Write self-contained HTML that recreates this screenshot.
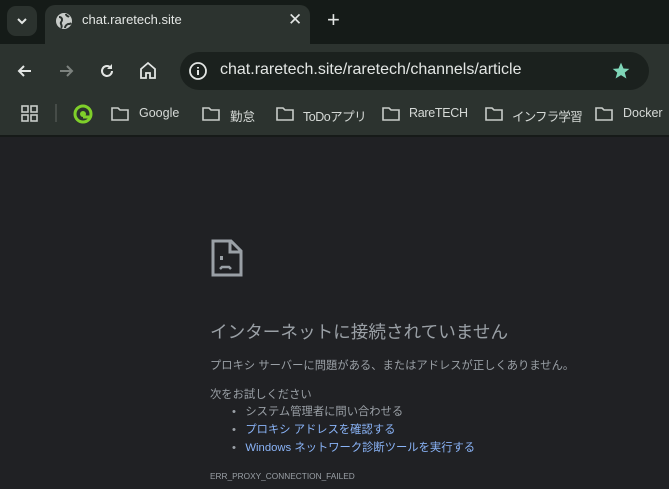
<!DOCTYPE html>
<html><head><meta charset="utf-8"><style>
*{margin:0;padding:0;box-sizing:border-box}
body{width:669px;height:489px;overflow:hidden;background:#202124;font-family:"Liberation Sans","Noto Sans CJK JP",sans-serif;position:relative}
.strip{position:absolute;left:0;top:0;width:669px;height:44px;background:#151b18}
.dd{position:absolute;left:7px;top:6px;width:30px;height:30px;border-radius:9px;background:#2b322e}
.tab{position:absolute;left:45px;top:5px;width:265px;height:40px;background:#2c332f;border-radius:10px 10px 0 0}
.tb{position:absolute;left:0;top:44px;width:669px;height:92px;background:#2c332f}
.omni{position:absolute;left:180px;top:52px;width:469px;height:38px;border-radius:19px;background:#1b211e}
.t{position:absolute;color:#e3e6e4;white-space:nowrap}
.bm{position:absolute;top:106px;font-size:12.5px;color:#d6dad7;white-space:nowrap}
.sep{position:absolute;left:0;top:135px;width:669px;height:2px;background:#161a18}
.p{position:absolute;white-space:nowrap;color:#9aa0a6}
.blue{color:#8ab4f8}
</style></head><body>
<div class="strip"></div>
<div class="dd"></div>
<svg style="position:absolute;left:15px;top:14px" width="14" height="14"><path d="M3 5l4 4 4-4" stroke="#e3e6e4" stroke-width="2" fill="none"/></svg>
<div class="tab"></div>
<svg style="position:absolute;left:55px;top:12px" width="18" height="18" viewBox="0 0 18 18"><circle cx="9" cy="9" r="8" fill="#c8ccc9"/><path d="M4 5c2 0 3 1 3 3s-2 2-1 4 1 3 0 4M11 2c0 2 2 2 3 3M10 16c0-2 1-3 3-4 2 0 2 0 3-1" stroke="#2c332f" stroke-width="2" fill="none"/></svg>
<div class="t" style="left:82px;top:12px;font-size:13px">chat.raretech.site</div>
<div class="t" style="left:288px;top:10px;font-size:17px">✕</div>
<div class="t" style="left:327px;top:7px;font-size:22px">+</div>
<div class="tb"></div>
<svg style="position:absolute;left:15px;top:61px" width="20" height="20"><path d="M16 10H4M9 5l-5 5 5 5" stroke="#e3e6e4" stroke-width="2" fill="none"/></svg>
<svg style="position:absolute;left:56px;top:61px" width="20" height="20"><path d="M4 10h12M11 5l5 5-5 5" stroke="#7c827e" stroke-width="2" fill="none"/></svg>
<svg style="position:absolute;left:97px;top:61px" width="20" height="20"><path d="M15 10a5 5 0 1 1-2-4" stroke="#e3e6e4" stroke-width="2" fill="none"/><path d="M15 3v5h-5z" fill="#e3e6e4"/></svg>
<svg style="position:absolute;left:138px;top:60px" width="20" height="22"><path d="M3 9l7-6 7 6v9h-5v-5H8v5H3z" stroke="#e3e6e4" stroke-width="1.8" fill="none"/></svg>
<div class="omni"></div>
<svg style="position:absolute;left:188px;top:61px" width="20" height="20"><circle cx="10" cy="10" r="8" stroke="#e3e6e4" stroke-width="1.8" fill="none"/><path d="M10 9v5M10 6v1.5" stroke="#e3e6e4" stroke-width="2"/></svg>
<div class="t" style="left:220px;top:61px;font-size:16px">chat.raretech.site/raretech/channels/article</div>
<svg style="position:absolute;left:611px;top:61px" width="20" height="20" viewBox="0 0 24 24"><path d="M12 2l3 7 7 .5-5.5 4.5 2 7-6.5-4-6.5 4 2-7L2 9.5 9 9z" fill="#7fd6b8"/></svg>
<svg style="position:absolute;left:21px;top:105px" width="18" height="18"><g fill="none" stroke="#c8ccc9" stroke-width="1.6"><rect x="1" y="1" width="6" height="6"/><rect x="10" y="1" width="6" height="6"/><rect x="1" y="10" width="6" height="6"/><rect x="10" y="10" width="6" height="6"/></g></svg>
<div style="position:absolute;left:55px;top:104px;width:2px;height:18px;background:#464c48"></div>
<svg style="position:absolute;left:73px;top:104px" width="20" height="20"><circle cx="10" cy="10" r="8" stroke="#7fcf2a" stroke-width="3" fill="none"/><circle cx="10" cy="10" r="3" fill="#7fcf2a"/><path d="M10 13h8" stroke="#7fcf2a" stroke-width="3"/></svg>
<svg width="0" height="0"><defs><symbol id="f" viewBox="0 0 20 16"><path d="M2 2h6l2 2h8v10H2z" stroke="#c8ccc9" stroke-width="1.6" fill="none"/></symbol></defs></svg>
<svg style="position:absolute;left:110px;top:106px" width="20" height="16"><use href="#f"/></svg><div class="bm" style="left:139px">Google</div>
<svg style="position:absolute;left:201px;top:106px" width="20" height="16"><use href="#f"/></svg><div class="bm" style="left:230px">勤怠</div>
<svg style="position:absolute;left:275px;top:106px" width="20" height="16"><use href="#f"/></svg><div class="bm" style="left:303px;letter-spacing:-0.5px">ToDoアプリ</div>
<svg style="position:absolute;left:381px;top:106px" width="20" height="16"><use href="#f"/></svg><div class="bm" style="left:409px;letter-spacing:-0.3px">RareTECH</div>
<svg style="position:absolute;left:484px;top:106px" width="20" height="16"><use href="#f"/></svg><div class="bm" style="left:512px;letter-spacing:-0.8px">インフラ学習</div>
<svg style="position:absolute;left:594px;top:106px" width="20" height="16"><use href="#f"/></svg><div class="bm" style="left:623px">Docker</div>
<div class="sep"></div>
<svg style="position:absolute;left:211px;top:239px" width="32" height="38" viewBox="0 0 32 38"><path d="M2 2h18l10 10v24H2z" stroke="#9aa0a6" stroke-width="3" fill="none"/><path d="M19 2v11h11" stroke="#9aa0a6" stroke-width="3" fill="none"/><rect x="9" y="17" width="3" height="4" fill="#9aa0a6"/><path d="M9 30l2-2h7l2 2" stroke="#9aa0a6" stroke-width="2.5" fill="none"/></svg>
<div class="p" style="left:210px;top:319px;font-size:17.6px">インターネットに接続されていません</div>
<div class="p" style="left:210px;top:357px;font-size:11.3px">プロキシ サーバーに問題がある、またはアドレスが正しくありません。</div>
<div class="p" style="left:210px;top:386px;font-size:11.3px">次をお試しください</div>
<div class="p" style="left:232px;top:403px;font-size:11.3px">•&nbsp;&nbsp; システム管理者に問い合わせる</div>
<div class="p" style="left:232px;top:421px;font-size:11.3px">•&nbsp;&nbsp; <span class="blue">プロキシ アドレスを確認する</span></div>
<div class="p" style="left:232px;top:439px;font-size:11.3px">•&nbsp;&nbsp; <span class="blue">Windows ネットワーク診断ツールを実行する</span></div>
<div class="p" style="left:210px;top:471px;font-size:8.3px">ERR_PROXY_CONNECTION_FAILED</div>
</body></html>
